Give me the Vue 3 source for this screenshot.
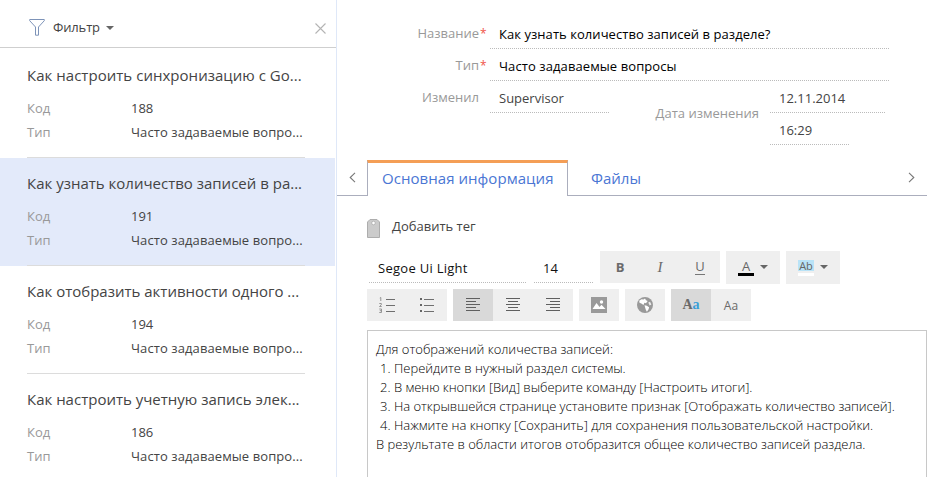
<script setup>
const records = [
  { title: 'Как настроить синхронизацию с Go...', code: '188', cls: 't1' },
  { title: 'Как узнать количество записей в ра...', code: '191', active: true, cls: 't2' },
  { title: 'Как отобразить активности одного ...', code: '194', cls: 't3' },
  { title: 'Как настроить учетную запись элек...', code: '186', cls: 't4' },
]
const steps = [
  'Перейдите в нужный раздел системы.',
  'В меню кнопки [Вид] выберите команду [Настроить итоги].',
  'На открывшейся странице установите признак [Отображать количество записей].',
  'Нажмите на кнопку [Сохранить] для сохранения пользовательской настройки.',
]
</script>

<template>
  <div class="app">
    <aside class="side">
      <header class="filter">
        <svg class="funnel" width="16" height="17" viewBox="0 0 16 17">
          <path d="M.7.5h14.6v1.2L9.500 8v8.200h-3V8L.7 1.700z" fill="none" stroke="#7d93b8" />
        </svg>
        <span class="filter-text">Фильтр</span>
        <i class="caret"></i>
        <svg class="close" width="11" height="11" viewBox="0 0 11 11">
          <path d="M.5.5l10 10M10.500.5l-10 10" stroke="#b4b4b4" stroke-width="1.1" />
        </svg>
      </header>
      <div class="list">
        <article v-for="r in records" :key="r.code" class="card" :class="{ active: r.active }">
          <div class="card-in">
            <h3 :class="r.cls">{{ r.title }}</h3>
            <div class="pair"><span class="lbl">Код</span><span>{{ r.code }}</span></div>
            <div class="pair"><span class="lbl">Тип</span><span class="type">Часто задаваемые вопро...</span></div>
          </div>
        </article>
      </div>
    </aside>

    <main class="main">
      <section class="form">
        <div class="row">
          <label class="name">Название<b>*</b></label>
          <div class="val dark wide"><span class="v1">Как узнать количество записей в разделе?</span></div>
        </div>
        <div class="row">
          <label>Тип<b>*</b></label>
          <div class="val dark wide"><span class="v2">Часто задаваемые вопросы</span></div>
        </div>
        <div class="row">
          <label class="ed">Изменил<b></b></label>
          <div class="val short"><span class="v3">Supervisor</span></div>
          <label class="date">Дата изменения</label>
          <div class="when">
            <div class="val day">12.11.2014</div>
            <div class="val time">16:29</div>
          </div>
        </div>
      </section>

      <nav class="tabs">
        <span class="arrow left"><svg width="7" height="11" viewBox="0 0 7 11"><path d="M6 .8L1.200 5.500 6 10.200" fill="none" stroke="#777" stroke-width="1.1" /></svg></span>
        <span class="tab on"><span class="tb1">Основная информация</span></span>
        <span class="tab"><span class="tb2">Файлы</span></span>
        <span class="arrow right"><svg width="7" height="11" viewBox="0 0 7 11"><path d="M1 .8l4.800 4.700L1 10.200" fill="none" stroke="#777" stroke-width="1.1" /></svg></span>
      </nav>

      <div class="tag">
        <svg width="13" height="19" viewBox="0 0 13 19">
          <path d="M.5 18.500V3L3 .5h7L12.500 3v15.500z" fill="#cbcbcb" stroke="#adadad" />
          <circle cx="6.500" cy="4" r="1.800" fill="#fff" stroke="#adadad" stroke-width=".8" />
        </svg>
        <span class="tagt">Добавить тег</span>
      </div>

      <div class="bar one">
        <div class="field font"><span class="ff">Segoe Ui Light</span></div>
        <div class="field size">14</div>
        <div class="group">
          <button class="bold">B</button>
          <button class="ital">I</button>
          <button class="under"><u>U</u></button>
        </div>
        <div class="group color">
          <span class="swatch ink"><span>A</span><i></i></span><i class="caret"></i>
        </div>
        <div class="group color">
          <span class="swatch mark"><span>Ab</span><i></i></span><i class="caret"></i>
        </div>
      </div>

      <div class="bar two">
        <div class="group">
          <button>
            <svg width="16" height="16" viewBox="0 0 16 16">
              <path d="M7 2.500h9M7 8.500h9M7 14.500h9" stroke="#6f6f6f" />
              <path d="M.8 1l1-.5V4M.3 6.500h2v1.300l-1.800 1.700h2.200M.3 12h2.200v3.500H.3M.8 13.700h1.700" fill="none" stroke="#8a8a8a" stroke-width=".9" />
            </svg>
          </button>
          <button>
            <svg width="16" height="16" viewBox="0 0 16 16">
              <path d="M5 2.500h10M5 8.500h10M5 14.500h10" stroke="#6f6f6f" />
              <path d="M1 1h2v2H1zM1 7h2v2H1zM1 13h2v2H1z" fill="#666" />
            </svg>
          </button>
        </div>
        <div class="group">
          <button class="on"><svg width="14" height="14" viewBox="0 0 14 14"><path d="M0 .5h14M0 3.500h10M0 6.500h14M0 9.500h10M0 12.500h14" stroke="#5f5f5f" /></svg></button>
          <button><svg width="14" height="14" viewBox="0 0 14 14"><path d="M0 .5h14M2 3.500h10M0 6.500h14M2 9.500h10M0 12.500h14" stroke="#5f5f5f" /></svg></button>
          <button><svg width="14" height="14" viewBox="0 0 14 14"><path d="M0 .5h14M4 3.500h10M0 6.500h14M4 9.500h10M0 12.500h14" stroke="#5f5f5f" /></svg></button>
        </div>
        <div class="group">
          <button>
            <svg width="16" height="16" viewBox="0 0 16 16">
              <path d="M0 0h16v16H0z" fill="#9a9a9a" />
              <path d="M1.500 12l4-6 3 4 2-2.200 4 4.200z" fill="#fff" />
              <circle cx="10.500" cy="5" r="1.700" fill="#fff" />
            </svg>
          </button>
        </div>
        <div class="group">
          <button>
            <svg width="16" height="16" viewBox="0 0 16 16">
              <circle cx="8" cy="8" r="8" fill="#999" />
              <path d="M2.200 3.800L4.500 2.200l2 .2L8 1.600l1 1.600 1.700.8L9 6.300 7.400 5.800 6.500 8 4.300 6.500 2.500 5.800zM7.500 8.300l2.300.5 2.300 1.400-.5 2-1.700 2.600-1.200-2.400z" fill="#fff" />
              <path d="M11.300 5.600l1.700-.8 1.400 2.700-1.800 1z" fill="#efefef" />
            </svg>
          </button>
        </div>
        <div class="group">
          <button class="on serif">A<em>a</em></button>
          <button class="plain">Aa</button>
        </div>
      </div>

      <div class="editor">
        <p class="e0">Для отображений количества записей:</p>
        <p v-for="(s, i) in steps" :key="i" class="step"><span class="num">{{ i + 1 }}.</span><span :class="'e' + (i + 1)">{{ s }}</span></p>
        <p class="e5">В результате в области итогов отобразится общее количество записей раздела.</p>
      </div>
    </main>
  </div>
</template>

<style>
html, body { margin: 0; background: #fff; overflow: hidden; }
</style>

<style scoped>
* { box-sizing: border-box; }
.app { display: flex; width: 931px; height: 477px; overflow: hidden; font: 13px/24px "Open Sans", "Noto Sans", sans-serif; color: #444; background: #fff; white-space: nowrap; }
.side { width: 337px; flex: none; border-right: 1px solid #dfe8f8; }
.filter { display: flex; align-items: center; height: 48px; border-bottom: 1px solid #cfcfcf; padding: 7px 10px 0 29px; }
.filter-text { margin-left: 8px; letter-spacing: -.15px; }
.caret { width: 0; height: 0; border: 4px solid transparent; border-top-color: #666; border-bottom: 0; }
.filter .caret { margin-left: 6px; margin-top: 1px; }
.close { margin-left: auto; margin-top: 3px; }
.list { padding-top: 2px; width: 335px; }
.card { height: 108px; padding: 0 30px 0 27px; }
.card.active { background: #e3eafa; }
.card-in { height: 108px; border-bottom: 1px solid #dcdcdc; padding-top: 13px; }
h3 { margin: 0 0 9px; font-weight: 400; font-size: 15px; line-height: 24px; }
.t1 { letter-spacing: .03px; }
.pair { display: flex; height: 24px; }
.lbl { width: 104px; color: #999; }
.type, .v2 { letter-spacing: .09px; }
.v1 { letter-spacing: .05px; }
.main { flex: 1; display: flex; flex-direction: column; padding-right: 4px; }
.form { height: 160px; padding-top: 17px; }
.row { display: flex; height: 32px; }
label { width: 150px; text-align: right; color: #999; line-height: 32px; }
label b { display: inline-block; width: 7px; padding-left: 1px; font-weight: 400; font-size: 12px; line-height: 16px; color: #f0564a; margin-right: 1px; text-align: left; }
.val { margin-left: 3px; height: 32px; line-height: 35px; padding-left: 9px; background: repeating-linear-gradient(90deg, #bbb 0 1px, transparent 1px 2px) left bottom / 100% 1px no-repeat; }
.dark { color: #000; }
.wide { width: 399px; }
.short { width: 119px; }
label.date { width: 150px; padding-top: 16px; }
.when { margin-left: 8px; }
.day { width: 115px; }
.time { width: 79px; }
.tabs { display: flex; height: 36px; border-bottom: 1px solid #abaebd; color: #4a76d4; font-size: 15px; }
.arrow { display: flex; align-items: center; }
.arrow.left { width: 30px; padding-left: 12px; }
.arrow.right { margin-left: auto; margin-right: 12px; }
.tab { padding: 6px 0 0 23px; }
.tb1 { letter-spacing: .05px; }
.tab.on { width: 201px; height: 36px; border: 1px solid #abaebd; border-top: 3px solid #f49e56; border-bottom: 0; background: #fff; padding: 3px 0 0 14px; }
.tag { display: flex; align-items: center; margin: 18px 0 0 30px; height: 28px; }
.tag svg { margin-top: 1px; }
.tagt { margin-left: 12px; margin-top: -5px; }
.bar { display: flex; gap: 6px; margin-left: 30px; }
.one { margin-top: 9px; height: 33px; }
.two { margin-top: 5px; height: 32px; }
.field { height: 32px; line-height: 35px; color: #111; background: repeating-linear-gradient(90deg, #bbb 0 1px, transparent 1px 2px) left bottom / 100% 1px no-repeat; }
.font { width: 157px; margin-left: 2px; padding-left: 9px; }
.ff { letter-spacing: .28px; }
.size { width: 60px; margin-left: 2px; padding-left: 9px; }
.group { display: flex; height: 32px; background: #efefef; }
button { width: 40px; height: 32px; padding: 0; border: 0; background: none; display: flex; align-items: center; justify-content: center; font: 13px "Open Sans", sans-serif; color: #6a6a6a; }
button.on { background: #d9d9d9; }
.bold { font-weight: 700; }
.ital { font: italic 15px "Liberation Serif", serif; }
.under u { text-decoration: none; border-bottom: 1px solid #777; line-height: 15px; font-size: 13px; }
.color { width: 54px; height: 33px; padding-left: 12px; }
.swatch { width: 16px; height: 16px; margin-top: 9px; display: flex; flex-direction: column; text-align: center; line-height: 13px; color: #666; font-size: 13px; }
.swatch span { height: 13px; line-height: 13px; }
.swatch i { height: 3px; background: #000; }
.mark { font-size: 11px; }
.mark span { height: 11px; line-height: 12px; background: #b9e3f7; }
.mark i { background: #fff; margin-top: 2px; }
.color .caret { margin: 14px 0 0 6px; }
.serif { font: bold 14px "Liberation Serif", serif; }
.serif em { font-style: normal; color: #3b9fd8; }
.plain { font-size: 12px; }
.editor { flex: 1; margin: 9px 0 0 30px; border: 1px solid #c8c8c8; border-bottom: 0; padding: 9px 0 0 8px; font-weight: 300; color: #000; line-height: 19px; }
p { margin: 0; }
.step { display: flex; }
.num { width: 18px; padding-left: 4px; }
.e2 { letter-spacing: -.05px; }
.e3 { letter-spacing: -.04px; }
.e4 { letter-spacing: -.03px; }
.e5 { letter-spacing: -.02px; }
</style>
